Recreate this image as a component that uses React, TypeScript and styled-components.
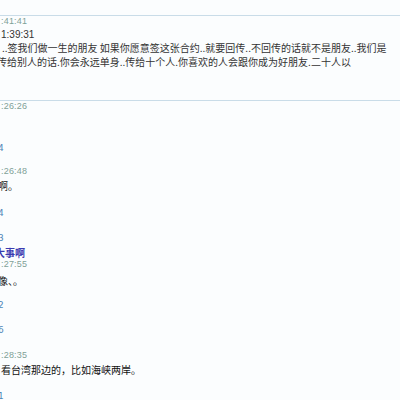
import React from "react";
import styled, { createGlobalStyle } from "styled-components";

const Global = createGlobalStyle`
  html, body { margin: 0; padding: 0; background: #fbfdfe; }
  body { overflow: hidden; width: 400px; height: 400px; }
`;

const Page = styled.div`
  display: flex;
  flex-direction: column;
  padding-top: 15px;
  width: 400px;
  height: 400px;
  overflow: hidden;
  background: #fbfdfe;
  font-family: "Noto Sans CJK SC", "DejaVu Sans", sans-serif;
`;

const Divider = styled.div<{ $mt?: number }>`
  height: 1px;
  background: #c9dce8;
  margin-top: ${(p) => p.$mt ?? 0}px;
  flex-shrink: 0;
`;

const Stamp = styled.div<{ $mt?: number; $x?: number }>`
  font-family: "Liberation Sans", Arial, sans-serif;
  font-size: 9px;
  line-height: 11px;
  height: 11px;
  color: #7fa197;
  letter-spacing: 0.2px;
  margin-top: ${(p) => p.$mt ?? 0}px;
  margin-left: ${(p) => p.$x ?? 0}px;
  white-space: nowrap;
  flex-shrink: 0;
`;

const QuoteTime = styled.div`
  font-family: "Liberation Sans", Arial, sans-serif;
  font-size: 10px;
  line-height: 12px;
  height: 12px;
  color: #333;
  margin-top: 2px;
  margin-left: 1px;
  white-space: nowrap;
  flex-shrink: 0;
`;

const Para = styled.div`
  font-size: 10px;
  line-height: 14px;
  color: #333;
  white-space: nowrap;
  flex-shrink: 0;
`;

const Line = styled.div<{ $x?: number }>`
  margin-left: ${(p) => p.$x ?? 0}px;
`;

const Floor = styled.div<{ $mt?: number }>`
  font-family: "DejaVu Sans", Verdana, sans-serif;
  font-size: 9px;
  line-height: 12px;
  height: 12px;
  color: #4f86b8;
  margin-top: ${(p) => p.$mt ?? 0}px;
  margin-left: -2px;
  flex-shrink: 0;
`;

const Body = styled.div<{ $mt?: number; $x?: number }>`
  font-size: 10px;
  line-height: 14px;
  height: 14px;
  color: #111;
  margin-top: ${(p) => p.$mt ?? 0}px;
  margin-left: ${(p) => p.$x ?? 0}px;
  white-space: nowrap;
  flex-shrink: 0;
`;

const Author = styled.div<{ $mt?: number }>`
  font-size: 10px;
  line-height: 12px;
  height: 12px;
  font-weight: bold;
  color: #3a3ab0;
  margin-top: ${(p) => p.$mt ?? 0}px;
  margin-left: -5px;
  white-space: nowrap;
  flex-shrink: 0;
`;

export default function App() {
  return (
    <>
      <Global />
      <Page>
        <Divider />
        <Stamp $x={1}>:41:41</Stamp>
        <QuoteTime>1:39:31</QuoteTime>
        <Para>
          <Line $x={2}>..签我们做一生的朋友 如果你愿意签这张合约..就要回传..不回传的话就不是朋友..我们是</Line>
          <Line $x={-3}>传给别人的话.你会永远单身..传给十个人.你喜欢的人会跟你成为好朋友.二十人以</Line>
        </Para>
        <Divider $mt={31} />
        <Stamp $x={1}>:26:26</Stamp>
        <Floor $mt={30}>4</Floor>
        <Stamp $mt={12} $x={1}>:26:48</Stamp>
        <Body $mt={2} $x={-2}>啊。</Body>
        <Floor $mt={14}>4</Floor>
        <Floor $mt={13}>3</Floor>
        <Author $mt={3}>大事啊</Author>
        <Stamp $x={1}>:27:55</Stamp>
        <Body $mt={4} $x={-2}>像、。</Body>
        <Floor $mt={11}>2</Floor>
        <Floor $mt={13}>6</Floor>
        <Stamp $mt={14} $x={1}>:28:35</Stamp>
        <Body $mt={2} $x={1}>看台湾那边的，比如海峡两岸。</Body>
        <Floor $mt={13}>1</Floor>
      </Page>
    </>
  );
}
